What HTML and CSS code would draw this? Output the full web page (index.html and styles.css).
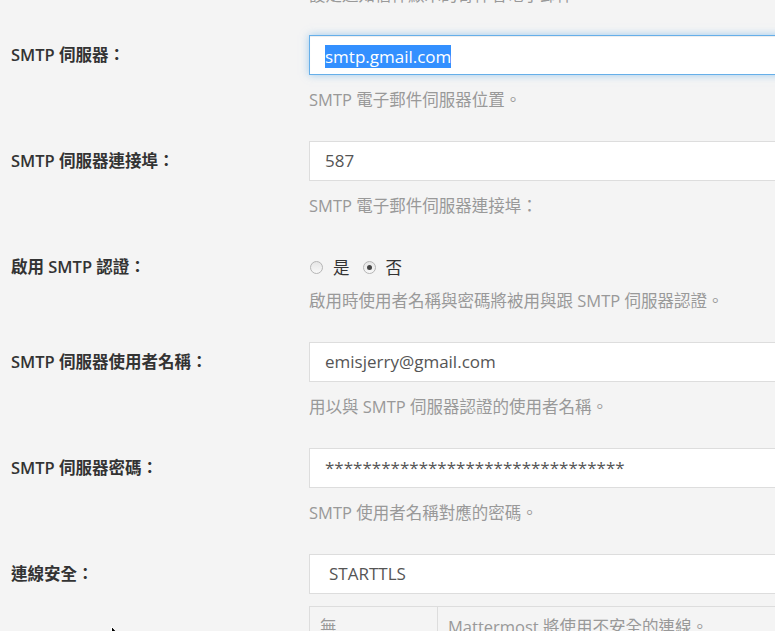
FILE: index.html
```html
<!DOCTYPE html>
<html lang="zh-Hant">
<head>
<meta charset="utf-8">
<title>SMTP 設定</title>
<link rel="stylesheet" href="styles.css">
</head>
<body>
<div class="settings">
  <p class="help lead-help">設定通知信件顯示的寄件者電子郵件。</p>

  <div class="row">
    <label class="label">SMTP 伺服器：</label>
    <div class="control">
      <div class="input focus"><span class="sel">smtp.gmail.com</span></div>
      <p class="help">SMTP 電子郵件伺服器位置。</p>
    </div>
  </div>

  <div class="row">
    <label class="label">SMTP 伺服器連接埠：</label>
    <div class="control">
      <div class="input">587</div>
      <p class="help">SMTP 電子郵件伺服器連接埠：</p>
    </div>
  </div>

  <div class="row">
    <label class="label">啟用 SMTP 認證：</label>
    <div class="control">
      <div class="radios">
        <span class="radio"></span><span class="radio-text">是</span>
        <span class="radio checked"></span><span class="radio-text">否</span>
      </div>
      <p class="help help-tight">啟用時使用者名稱與密碼將被用與跟 SMTP 伺服器認證。</p>
    </div>
  </div>

  <div class="row">
    <label class="label">SMTP 伺服器使用者名稱：</label>
    <div class="control">
      <div class="input">emisjerry@gmail.com</div>
      <p class="help">用以與 SMTP 伺服器認證的使用者名稱。</p>
    </div>
  </div>

  <div class="row">
    <label class="label">SMTP 伺服器密碼：</label>
    <div class="control">
      <div class="input">********************************</div>
      <p class="help">SMTP 使用者名稱對應的密碼。</p>
    </div>
  </div>

  <div class="row">
    <label class="label">連線安全：</label>
    <div class="control">
      <div class="input select">STARTTLS</div>
      <table class="options">
        <tr><td class="opt-name">無</td><td>Mattermost 將使用不安全的連線。</td></tr>
      </table>
    </div>
  </div>
</div>

<svg class="cursor" width="12" height="19" viewBox="0 0 12 19">
  <path d="M0.5 0.5 L0.5 16 L4 12.5 L6.5 18 L8.5 17 L6 11.5 L11 11.5 Z" fill="#000" stroke="#fff" stroke-width="1"/>
</svg>
</body>
</html>
```

FILE: styles.css
```css
html, body {
  margin: 0;
  height: 100%;
  overflow: hidden;
}

body {
  background: #f4f4f4;
  font-family: "Open Sans", "Noto Sans CJK TC", sans-serif;
  color: #333;
}

.settings {
  padding-left: 11px;
  margin-top: -15px;
  overflow: hidden;
}

.help {
  margin: 15px 0 0;
  font-size: 16.5px;
  line-height: 20px;
  color: #999;
  white-space: nowrap;
}

.lead-help {
  margin: 0 0 30px 298px;
}

.row {
  display: grid;
  grid-template-columns: 298px 540px;
  align-items: start;
  margin-bottom: 31px;
}

.label {
  font-size: 16.5px;
  font-weight: 600;
  line-height: 40px;
  color: #333;
  white-space: nowrap;
}

.input {
  height: 40px;
  box-sizing: border-box;
  border: 1px solid #ddd;
  background: #fff;
  padding: 0 15px;
  font-size: 17px;
  line-height: 38px;
  color: #555;
  white-space: nowrap;
}

.input.focus {
  border-color: #66afe9;
  box-shadow: inset 0 1px 1px rgba(0, 0, 0, 0.075), 0 0 8px rgba(102, 175, 233, 0.6);
}

.sel {
  display: inline-block;
  background: #3390ff;
  color: #fff;
  line-height: 23px;
  vertical-align: middle;
}

.input.select {
  padding-left: 19px;
}

.radios {
  height: 40px;
  display: flex;
  align-items: center;
  font-size: 16.5px;
  color: #333;
}

.radio {
  width: 11px;
  height: 11px;
  border-radius: 50%;
  border: 1px solid #b5b5b5;
  background: linear-gradient(#e6e6e6, #f8f8f8);
  display: flex;
  align-items: center;
  justify-content: center;
  margin-left: 1px;
}

.radio.checked::after {
  content: "";
  width: 5px;
  height: 5px;
  border-radius: 50%;
  background: #444;
}

.radio-text {
  margin: 0 12px 0 10px;
}

.help-tight {
  margin-top: 4px;
}

.options {
  margin-top: 12px;
  border-collapse: collapse;
  width: 100%;
  font-size: 16.5px;
  color: #999;
}

.options td {
  border: 1px solid #ddd;
  padding: 10px 10px;
  line-height: 20px;
  white-space: nowrap;
}

.options .opt-name {
  width: 107px;
}

.cursor {
  position: absolute;
  left: 111px;
  top: 626px;
}
```
